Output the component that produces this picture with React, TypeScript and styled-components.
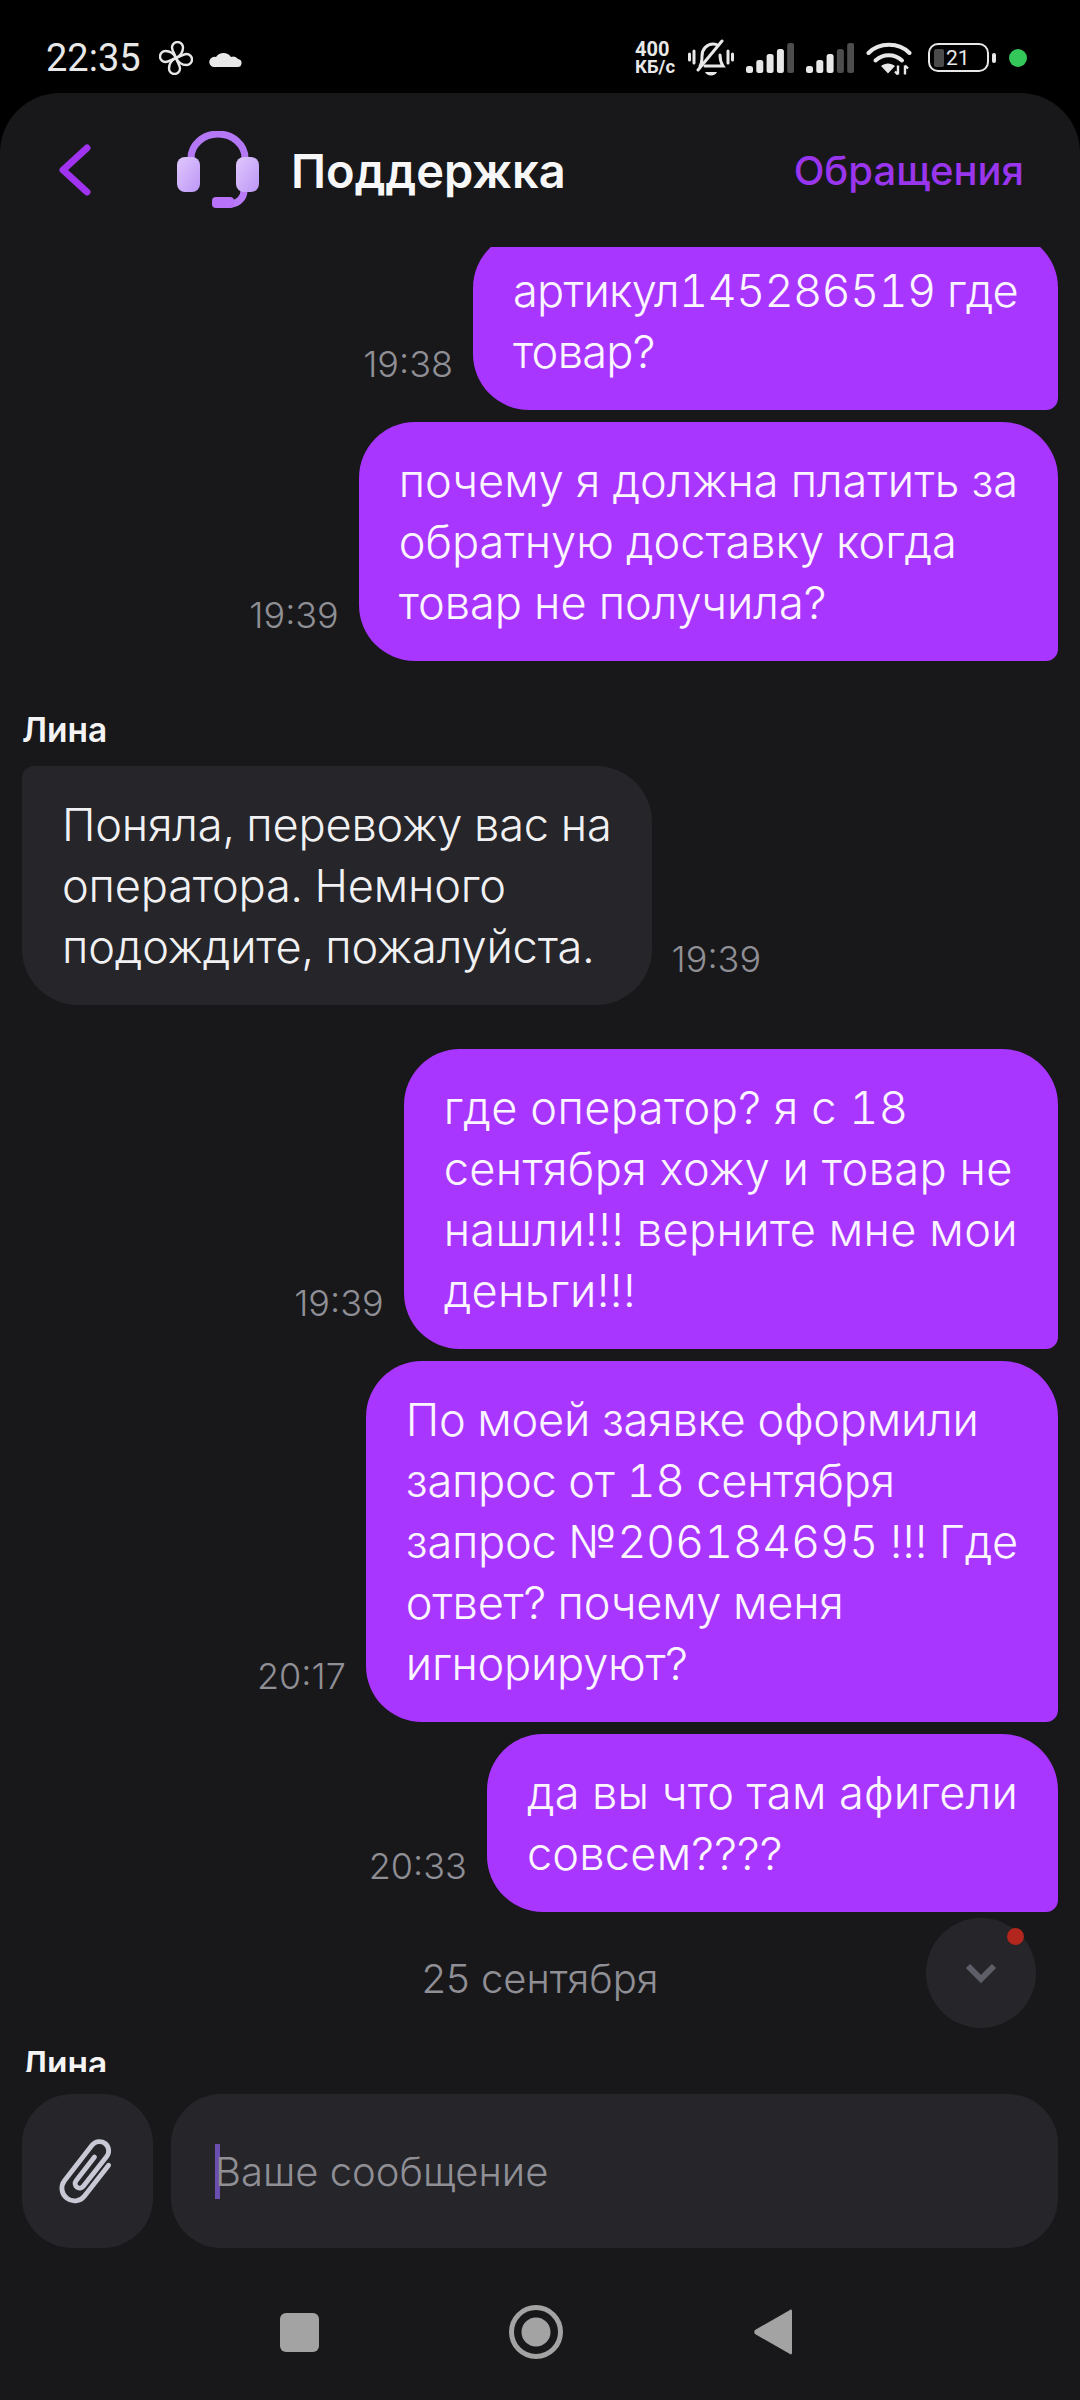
import { createGlobalStyle, styled } from "styled-components";
import type { ReactNode } from "react";

const GlobalStyle = createGlobalStyle`
  html, body {
    margin: 0;
    padding: 0;
    background: #000;
  }
  * {
    box-sizing: border-box;
  }
`;

const Page = styled.div`
  width: 1080px;
  height: 2400px;
  background: #000;
  display: flex;
  flex-direction: column;
  overflow: hidden;
  font-family: Inter, "Noto Sans", sans-serif;
`;

const StatusBar = styled.div`
  height: 93px;
  flex: none;
  display: flex;
  align-items: center;
  justify-content: space-between;
  padding: 22px 53px 0 46px;
  color: #e8e8e8;
`;

const StatusGroup = styled.div<{ $gap: number }>`
  display: flex;
  align-items: center;
  gap: ${(props) => props.$gap}px;
`;

const Clock = styled.span`
  font-family: Roboto, sans-serif;
  font-size: 38px;
  line-height: 44px;
  margin-right: 3px;
`;

const Speed = styled.div`
  font-family: Roboto, sans-serif;
  font-weight: 700;
  font-size: 20px;
  line-height: 18px;
  width: 41px;
  white-space: nowrap;
`;

const SpeedUnit = styled.div`
  font-size: 18.5px;
`;

const Sheet = styled.div`
  flex: 1;
  min-height: 0;
  background: #18181b;
  border-radius: 60px 60px 0 0;
  display: flex;
  flex-direction: column;
  position: relative;
`;

const Header = styled.header`
  height: 154px;
  flex: none;
  display: flex;
  align-items: center;
  padding: 0 56px 0 58px;
`;

const BackIcon = styled.svg`
  flex: none;
  margin-right: 84px;
`;

const HeaderTitle = styled.h1`
  margin: 0 0 0 31px;
  flex: 1;
  font-size: 47px;
  font-weight: 600;
  color: #f7f7f8;
`;

const HeaderLink = styled.span`
  font-size: 40px;
  font-weight: 500;
  color: #9a35ee;
`;

const Messages = styled.div`
  height: 1825px;
  flex: none;
  overflow: hidden;
  display: flex;
  flex-direction: column;
  padding: 0 22px;
`;

const Row = styled.div<{ $out?: boolean; $top: number }>`
  display: flex;
  flex: none;
  align-items: flex-end;
  gap: 20px;
  justify-content: ${(props) => (props.$out ? "flex-end" : "flex-start")};
  margin-top: ${(props) => props.$top}px;
`;

const Bubble = styled.div<{ $out?: boolean; $tracking: number }>`
  padding: 28px 40px;
  font-size: 45.2px;
  font-weight: 350;
  line-height: 61px;
  font-variant-numeric: tabular-nums;
  letter-spacing: ${(props) => props.$tracking}px;
  white-space: pre;
  color: ${(props) => (props.$out ? "#fbf5ff" : "#f1f1f3")};
  background: ${(props) => (props.$out ? "#a936ff" : "#25252a")};
  border-radius: ${(props) => (props.$out ? "56px 56px 12px 56px" : "12px 56px 56px 56px")};
`;

const Time = styled.span`
  font-size: 36px;
  font-weight: 300;
  line-height: 40px;
  color: #8f8f95;
  margin-bottom: 26px;
`;

const SenderName = styled.div<{ $top: number }>`
  flex: none;
  font-size: 33.5px;
  font-weight: 600;
  line-height: 40px;
  color: #f4f4f5;
  margin-top: ${(props) => props.$top}px;
  margin-bottom: 16px;
`;

const DateLabel = styled.div`
  flex: none;
  margin-top: 42px;
  text-align: center;
  font-size: 40px;
  font-weight: 300;
  line-height: 50px;
  color: #8f8f95;
`;

const ScrollDown = styled.button`
  position: absolute;
  left: 926px;
  top: 1825px;
  width: 110px;
  height: 110px;
  border: 0;
  padding: 0;
  border-radius: 50%;
  background: #25252a;
  display: flex;
  align-items: center;
  justify-content: center;
`;

const UnreadDot = styled.span`
  position: absolute;
  top: 10px;
  right: 12px;
  width: 17px;
  height: 17px;
  border-radius: 50%;
  background: #b3261e;
`;

const Composer = styled.div`
  flex: none;
  display: flex;
  gap: 18px;
  padding: 22px 22px 0;
`;

const AttachButton = styled.div`
  width: 131px;
  height: 154px;
  flex: none;
  border-radius: 50px;
  background: #25252a;
  display: flex;
  align-items: center;
  justify-content: center;
`;

const InputBox = styled.div`
  flex: 1;
  height: 154px;
  border-radius: 50px;
  background: #25252a;
  display: flex;
  align-items: center;
  padding-left: 44px;
`;

const Caret = styled.span`
  width: 5px;
  height: 55px;
  background: #6b4fb0;
  margin-right: -5px;
`;

const Placeholder = styled.span`
  font-size: 40px;
  font-weight: 300;
  color: #8f8f95;
`;

const NavBar = styled.nav`
  flex: 1;
  display: flex;
  align-items: center;
  justify-content: center;
  gap: 190px;
  padding: 16px 8px 0 0;
`;

const NavSquare = styled.span`
  width: 39px;
  height: 39px;
  border-radius: 6px;
  background: #a3a3a3;
`;

const IconSvg = styled.svg`
  display: block;
  flex: none;
`;

const BatteryWrap = styled.div`
  display: flex;
  align-items: center;
  gap: 3px;
  margin-left: 4px;
`;

const Battery = styled.div`
  width: 61px;
  height: 29px;
  border: 2.5px solid #e8e8e8;
  border-radius: 10px;
  display: flex;
  align-items: center;
  padding-left: 4px;
  font-family: Roboto, sans-serif;
  font-size: 21px;
  color: #e8e8e8;
`;

const BatteryFill = styled.span`
  width: 10px;
  height: 18px;
  background: #4a4a4a;
  border-radius: 2px;
  margin-right: 2px;
`;

const BatteryNub = styled.span`
  width: 4px;
  height: 10px;
  border-radius: 2px;
  background: #e8e8e8;
`;

const GreenDot = styled.span`
  width: 18px;
  height: 18px;
  margin-left: 1px;
  border-radius: 50%;
  background: #34c759;
`;

type MessageProps = {
  text: string;
  time: string;
  top: number;
  out?: boolean;
  tracking?: number;
};

function Message({ text, time, top, out, tracking = 0 }: MessageProps) {
  const bubble = (
    <Bubble $out={out} $tracking={tracking}>
      {text}
    </Bubble>
  );

  return (
    <Row $out={out} $top={top}>
      {out ? <Time>{time}</Time> : bubble}
      {out ? bubble : <Time>{time}</Time>}
    </Row>
  );
}

function Svg({ w, h, children }: { w: number; h: number; children: ReactNode }) {
  return (
    <IconSvg width={w} height={h} viewBox={`0 0 ${w} ${h}`} fill="none">
      {children}
    </IconSvg>
  );
}

const PETAL = "M17 17C15.500 12.500 13 9.500 13 6.500a5.500 5.500 0 0 1 11 0C24 11 21 15 17 17Z";

function Fan() {
  return (
    <Svg w={34} h={34}>
      <g stroke="#e8e8e8" strokeWidth="2.400" strokeLinejoin="round">
        {[0, 90, 180, 270].map((angle) => (
          <path key={angle} d={PETAL} transform={`rotate(${angle} 17 17)`} />
        ))}
      </g>
    </Svg>
  );
}

function Cloud() {
  return (
    <Svg w={34} h={20}>
      <path d="M5 19h24a4 4 0 0 0 1-8 6 6 0 0 0-7-2A9 9 0 0 0 8 9a5 5 0 0 0-3 10Z" fill="#e8e8e8" />
    </Svg>
  );
}

function MutedBell() {
  return (
    <Svg w={46} h={38}>
      <g stroke="#e8e8e8" strokeWidth="3" strokeLinecap="round">
        <path d="M1.500 15v6M6 12v12M40 12v12M44.500 15v6" />
        <path d="M12 27c2-3 2-6 2-10 0-7 5-12 11-12 2 0 4 .6 5 1.500" />
        <path d="M32 16c0 5 1 8 3 11H17" />
        <path d="M10 31 34 2" />
      </g>
      <path d="M17 33h12c-1 2-3 3.500-6 3.500S18 35 17 33Z" fill="#e8e8e8" />
    </Svg>
  );
}

function Signal({ dim }: { dim: number }) {
  const bars = [7, 13, 19, 24, 30];
  return (
    <Svg w={48} h={32}>
      {bars.map((height, index) => (
        <rect
          key={index}
          x={index * 10.3}
          y={31 - height}
          width={7}
          height={height}
          rx={2.500}
          fill={index >= bars.length - dim ? "#4d4d4d" : "#e8e8e8"}
        />
      ))}
    </Svg>
  );
}

function Wifi() {
  return (
    <Svg w={46} h={34}>
      <g stroke="#e8e8e8" strokeWidth="4" strokeLinecap="round">
        <path d="M2.500 12C13 1 33 1 43.500 12" />
        <path d="M9.500 19.500c7.500-7 19-7 26.500 0" />
      </g>
      <path d="M15 25c4-3.500 10-3.500 14 0l-7 7.500Z" fill="#e8e8e8" />
      <path d="M32 24.500v9M32 33.500l-3-3M39 33.500v-9M39 24.500l3 3" stroke="#e8e8e8" strokeWidth="2.400" />
    </Svg>
  );
}

function Headset() {
  return (
    <Svg w={84} h={78}>
      <defs>
        <linearGradient id="earGrad" x1="0" y1="0" x2="1" y2="1">
          <stop offset="0" stopColor="#e0c7ff" />
          <stop offset="1" stopColor="#bd97f5" />
        </linearGradient>
      </defs>
      <path d="M15 30V27a27 24 0 0 1 54 0v3" stroke="#b478f5" strokeWidth="7" />
      <path d="M68 60c0 7-6 12-12 13H44" stroke="#b97af7" strokeWidth="7" />
      <rect x="36" y="66" width="22" height="11" rx="4" fill="#b872fa" />
      <rect x="1" y="26" width="23" height="35" rx="8" fill="url(#earGrad)" />
      <rect x="60" y="26" width="23" height="35" rx="8" fill="url(#earGrad)" />
    </Svg>
  );
}

function Paperclip() {
  return (
    <Svg w={66} h={68}>
      <g transform="translate(33 34) rotate(38) scale(1.15) translate(-13 -31)">
        <path
          d="M24 16V50a11 11 0 0 1-22 0V11a8 8 0 0 1 16 0V44a4 4 0 0 1-8 0V18"
          stroke="#c9c9d6"
          strokeWidth="4.200"
          strokeLinecap="round"
        />
      </g>
    </Svg>
  );
}

export default function App() {
  return (
    <Page>
      <GlobalStyle />
      <StatusBar>
        <StatusGroup $gap={15}>
          <Clock>22:35</Clock>
          <Fan />
          <Cloud />
        </StatusGroup>
        <StatusGroup $gap={12}>
          <Speed>
            400
            <SpeedUnit>КБ/с</SpeedUnit>
          </Speed>
          <MutedBell />
          <Signal dim={1} />
          <Signal dim={2} />
          <Wifi />
          <BatteryWrap>
            <Battery>
              <BatteryFill />
              21
            </Battery>
            <BatteryNub />
          </BatteryWrap>
          <GreenDot />
        </StatusGroup>
      </StatusBar>
      <Sheet>
        <Header>
          <BackIcon width="34" height="52" viewBox="0 0 34 52" fill="none">
            <path d="M29 4 5 26l24 22" stroke="#a033f0" strokeWidth="7" strokeLinecap="round" strokeLinejoin="round" />
          </BackIcon>
          <Headset />
          <HeaderTitle>Поддержка</HeaderTitle>
          <HeaderLink>Обращения</HeaderLink>
        </Header>
        <Messages>
          <Message out top={-15} tracking={-0.73} time="19:38" text={"артикул145286519 где\nтовар?"} />
          <Message out top={12} tracking={-0.05} time="19:39" text={"почему я должна платить за\nобратную доставку когда\nтовар не получила?"} />
          <SenderName $top={49}>Лина</SenderName>
          <Message top={0} tracking={-0.2} time="19:39" text={"Поняла, перевожу вас на\nоператора. Немного\nподождите, пожалуйста."} />
          <Message out top={44} tracking={0.35} time="19:39" text={"где оператор? я с 18\nсентября хожу и товар не\nнашли!!! верните мне мои\nденьги!!!"} />
          <Message out top={12} tracking={-0.27} time="20:17" text={"По моей заявке оформили\nзапрос от 18 сентября\nзапрос №206184695 !!! Где\nответ? почему меня\nигнорируют?"} />
          <Message out top={12} tracking={0.2} time="20:33" text={"да вы что там афигели\nсовсем????"} />
          <DateLabel>25 сентября</DateLabel>
          <SenderName $top={40}>Лина</SenderName>
        </Messages>
        <ScrollDown>
          <UnreadDot />
          <svg width="34" height="22" viewBox="0 0 34 22" fill="none">
            <path d="M4 4 17 17 30 4" stroke="#5e5e68" strokeWidth="6" />
          </svg>
        </ScrollDown>
        <Composer>
          <AttachButton>
            <Paperclip />
          </AttachButton>
          <InputBox>
            <Caret />
            <Placeholder>Ваше сообщение</Placeholder>
          </InputBox>
        </Composer>
        <NavBar>
          <NavSquare />
          <svg width="54" height="54" viewBox="0 0 54 54" fill="none">
            <circle cx="27" cy="27" r="24.500" stroke="#a3a3a3" strokeWidth="5" />
            <circle cx="27" cy="27" r="14.500" fill="#a3a3a3" />
          </svg>
          <svg width="40" height="48" viewBox="0 0 40 48" fill="none">
            <path d="M37 2c1-1 2 0 2 1v42c0 1-1 2-2 1L2 26c-1-1-1-3 0-4Z" fill="#a3a3a3" />
          </svg>
        </NavBar>
      </Sheet>
    </Page>
  );
}
